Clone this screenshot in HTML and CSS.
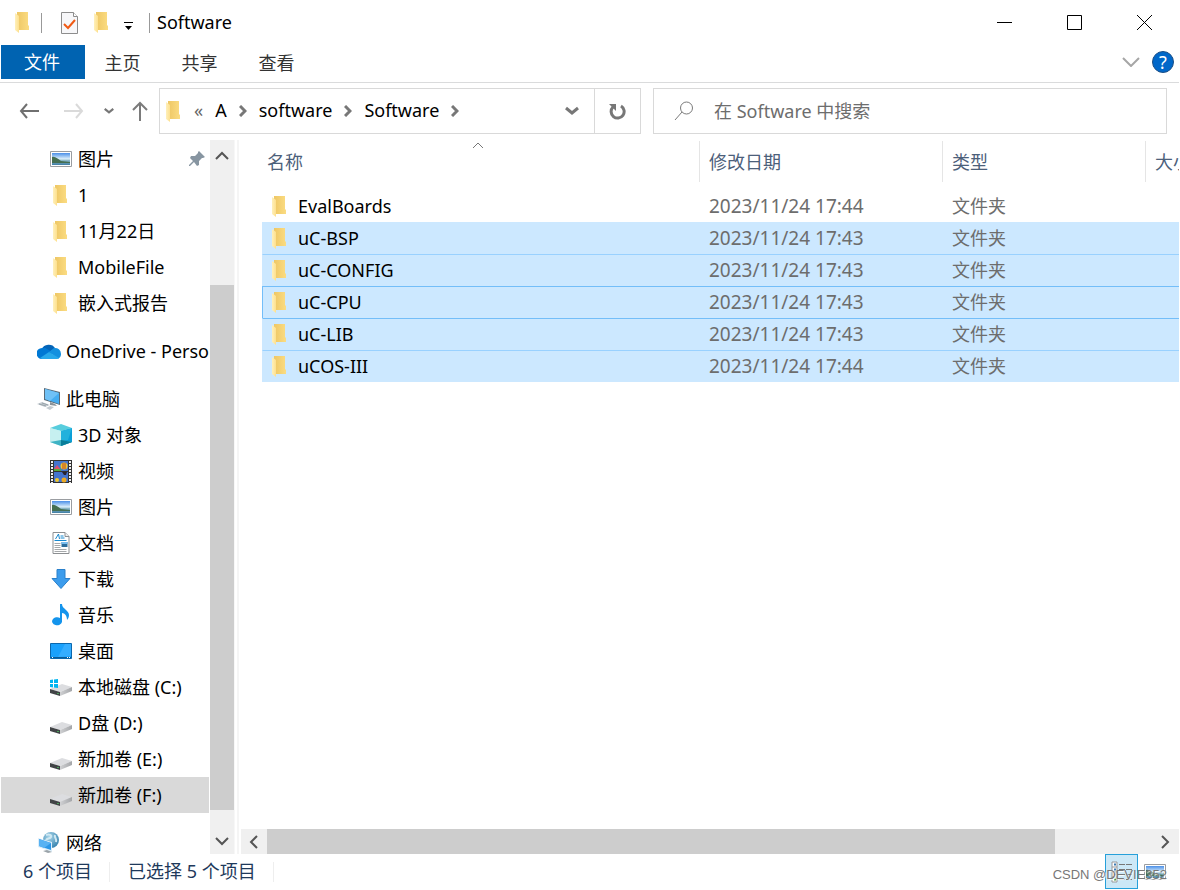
FILE: index.html
```html
<!DOCTYPE html>
<html lang="zh-CN">
<head>
<meta charset="utf-8">
<meta name="viewport" content="width=device-width, initial-scale=1">
<title>Software</title>
<link rel="stylesheet" href="styles.css">
</head>
<body>
<svg class="defs" aria-hidden="true">
  <defs>
    <linearGradient id="gf" x1="0" x2="1"><stop offset="0" stop-color="#eec765"/><stop offset="1" stop-color="#fbdc82"/></linearGradient>
    <linearGradient id="gl" x1="0" x2="1"><stop offset="0" stop-color="#fff0bb"/><stop offset="1" stop-color="#fde08e"/></linearGradient>
    <linearGradient id="gs" x1="0" x2="0" y1="0" y2="1"><stop offset="0" stop-color="#4a8fe8"/><stop offset=".5" stop-color="#dff1fb"/><stop offset=".6" stop-color="#8fb9c9"/><stop offset="1" stop-color="#3f7ea5"/></linearGradient>
    <linearGradient id="gd" x1="0" x2="1"><stop offset="0" stop-color="#d0d1d3"/><stop offset="1" stop-color="#a4a6a9"/></linearGradient>
    <radialGradient id="gg" cx=".4" cy=".3" r=".8"><stop offset="0" stop-color="#a9d6ea"/><stop offset="1" stop-color="#2b7aa8"/></radialGradient>
  </defs>
  <symbol id="folder" viewBox="0 0 14 21"><path d="M2 0h11v13l1 1v4H2z" fill="url(#gf)"/><path d="M0 1l4 3v17l-4-3z" fill="url(#gl)"/></symbol>
  <symbol id="picture" viewBox="0 0 22 16"><path d="M.5.5h21v15H.5z" fill="#fff" stroke="#9a9da1"/><path d="M2 2h18v12H2z" fill="url(#gs)"/><path d="M2 6c3-1 6 2 9 4l9 1v1H2z" fill="#456f52"/></symbol>
  <symbol id="cloud" viewBox="0 0 24 16"><path d="M5 6a7 6 0 0 1 13-1l-6 5z" fill="#0364b8"/><path d="M5 5a6 6 0 0 1 5 1l7 4-12 6A5 5 0 0 1 5 5z" fill="#0078d4"/><path d="M12 9l5-4a6 6 0 0 1 7 6 5 5 0 0 1-3 5z" fill="#1490df"/><path d="M3 15l9-6 10 6-2 1H5z" fill="#28a8ea"/></symbol>
  <symbol id="pc" viewBox="0 0 24 22"><path d="M7 0l16 4v13L7 12z" fill="#596b78"/><path d="M8 1l14 4v11L8 11z" fill="#45adf1"/><path d="M8 1l14 4-9 8-5-2z" fill="#6fc1f6"/><path d="M13 14l5 2 2 2-7-1z" fill="#8a9298"/><path d="M0 16l5-2 8 3-5 2z" fill="#c4cbd0"/><path d="M9 20l4-2 4 1-4 3z" fill="#c4cbd0"/><path d="M2 16l7 2M5 15l6 2" stroke="#9aa5ac" fill="none"/></symbol>
  <symbol id="cube" viewBox="0 0 22 22"><path d="M0 4l11 3v15L0 18z" fill="#b5ecef"/><path d="M11 7l11-3v14l-11 4z" fill="#0b9fd8"/><path d="M0 4l11-4 11 4-11 3z" fill="#58cddd"/><path d="M0 4l11 3v9L0 18z" fill="#c6f0f0"/><path d="M11 7l11-3-4 12-7 1z" fill="#22b1dc"/><path d="M0 18l11-2 11 2-11 4z" fill="#3fb3c4"/><path d="M11 16l11 2-11 4z" fill="#0a7e9a"/></symbol>
  <symbol id="video" viewBox="0 0 22 23"><path d="M0 0h22v23H0z" fill="#333"/><path d="M4 1h14v10H4zM4 12h14v10H4z" fill="#4474ce"/><path d="M2 1v22M20 1v22" stroke="#f1f1f1" stroke-width="2" stroke-dasharray="2 1"/><circle cx="14" cy="6" r="3.500" fill="#f0c62c"/><path d="M13 3v6M15 3v6" stroke="#b9442c"/><path d="M4 9l3-4 4 5z" fill="#e04e6a"/><path d="M4 10h7" stroke="#5aab3c" stroke-width="2"/><path d="M12 12h5l-1 3h-2z" fill="#282330"/><circle cx="7" cy="20" r="2" fill="#f0c62c"/><circle cx="14" cy="20" r="2.500" fill="#ecaa24"/></symbol>
  <symbol id="doc" viewBox="0 0 17 22"><path d="M.5.5h12l4 4v17H.5z" fill="#fff" stroke="#8c8f92"/><path d="M12.500.5v4h4" fill="#eee" stroke="#8c8f92"/><path d="M3 7l3-5 1 5M8 4h3M8 6h4M2 8.500h12" stroke="#1688cf" fill="none"/><path d="M2 11.500h6M2 13.500h6M2 15.500h6M2 17.500h12M2 19.500h12" stroke="#a5a8aa"/><path d="M9 10h6v5H9z" fill="#2d6e9c"/><path d="M9 10h6v2H9z" fill="#78bdef"/></symbol>
  <symbol id="down" viewBox="0 0 20 20"><path d="M6 .5h8v9h5l-9 10-9-10h5z" fill="#3c9cec" stroke="#2a80cb"/></symbol>
  <symbol id="music" viewBox="0 0 16 22"><path d="M7 0h2c0 5 7 6 7 11 0 2-1 4-2 5 0-4-2-7-5-7v9a5 4 0 1 1-2-4z" fill="#1494ec"/></symbol>
  <symbol id="desktop" viewBox="0 0 22 16"><path d="M.5.5h21v15H.5z" fill="#1aa1fc" stroke="#0b68ae"/><path d="M15 1h6v12L8 14z" fill="#35adff"/><path d="M1 14.500h20" stroke="#0b5b96"/><path d="M2 14.500h1M17 14.500h1M19 14.500h1" stroke="#fff"/></symbol>
  <symbol id="drive" viewBox="0 0 22 12"><path d="M0 5l12-5 10 3-12 5z" fill="#dcdde0"/><path d="M10 8l12-5v4l-12 5z" fill="url(#gd)"/><path d="M0 5l10 3v4L0 9z" fill="#414446"/><path d="M7 9.500h2" stroke="#4ca35b"/></symbol>
  <symbol id="windrive" viewBox="0 0 22 17"><use href="#drive" y="5" width="22" height="12"/><path d="M0 1l3-.5V4H0zM4 .4L8 0v4H4zM0 5h3v3.500L0 8zM4 5h4v4l-4-.4z" fill="#00b5f1"/></symbol>
  <symbol id="network" viewBox="0 0 22 22"><circle cx="13" cy="8" r="8" fill="url(#gg)"/><path d="M8 3c3-1 6 0 5 2s-4 1-5 3M17 3c-1 3 2 3 1 7" stroke="#cfe8f2" stroke-width="2" fill="none"/><path d="M0 6l14 4v10L0 15z" fill="#dceefa"/><path d="M1 7l12 4v7L1 14z" fill="#2c97e8"/><path d="M1 7l12 4-7 5-5-2z" fill="#58b2f3"/><path d="M5 19l5 2 4-1-5-2z" fill="#9aa3a9"/></symbol>
  <symbol id="pin" viewBox="0 0 16 16"><path d="M10 0l6 6-2 1-1 0-3 3v4l-2 1-3-4-4 4-1 0 0-1 4-4-3-3 1-2h4l3-3V1z" fill="#8795a1"/></symbol>
  <symbol id="cdown" viewBox="0 0 14 10"><path d="M1 2l6 5 6-5" fill="none" stroke="currentColor" stroke-width="3"/></symbol>
  <symbol id="sep" viewBox="0 0 8 12"><path d="M1 1l5 5-5 5" fill="none" stroke="#777" stroke-width="3"/></symbol>
</svg>

<header class="titlebar">
  <svg class="folder" aria-hidden="true"><use href="#folder"/></svg>
  <span class="rule"></span>
  <button class="quick check" aria-label="属性"><svg width="17" height="22" viewBox="0 0 17 22"><path d="M.5.5h12l4 4v17H.5z" fill="#f7f7f9" stroke="#8d8d8d"/><path d="M12.500.5v4h4" fill="#fff" stroke="#8d8d8d"/><path d="M3 12l4 4 7-8" fill="none" stroke="#f05a14" stroke-width="2"/></svg></button>
  <button class="quick" aria-label="新建文件夹"><svg class="folder"><use href="#folder"/></svg></button>
  <button class="quick more" aria-label="自定义快速访问工具栏"><svg width="9" height="8" viewBox="0 0 9 8"><path d="M0 .5h9" stroke="#000"/><path d="M1 4h7L4.500 8z"/></svg></button>
  <span class="rule"></span>
  <h1>Software</h1>
  <div class="winctl">
    <button aria-label="最小化"><svg width="15" height="15" viewBox="0 0 15 15"><path d="M0 7.500h15" stroke="#000"/></svg></button>
    <button aria-label="最大化"><svg width="15" height="15" viewBox="0 0 15 15"><path d="M.5.5h14v14H.5z" fill="none" stroke="#000"/></svg></button>
    <button aria-label="关闭"><svg width="15" height="15" viewBox="0 0 15 15"><path d="M0 0l15 15M15 0L0 15" stroke="#000"/></svg></button>
  </div>
</header>

<nav class="tabs" aria-label="功能区">
  <button class="tab file">文件</button>
  <button class="tab">主页</button>
  <button class="tab">共享</button>
  <button class="tab">查看</button>
  <button class="expand" aria-label="展开功能区"><svg width="18" height="10" viewBox="0 0 18 10"><path d="M1 1l8 8 8-8" fill="none" stroke="#a6a6a6" stroke-width="2"/></svg></button>
  <button class="help" aria-label="帮助">?</button>
</nav>

<div class="addressrow">
  <button class="arrow" aria-label="后退"><svg width="20" height="16" viewBox="0 0 20 16"><path d="M8 1L2 8l6 7M2 8h18" fill="none" stroke="#707070" stroke-width="2"/></svg></button>
  <button class="arrow" aria-label="前进"><svg width="20" height="16" viewBox="0 0 20 16"><path d="M12 1l6 7-6 7M18 8H0" fill="none" stroke="#dadada" stroke-width="2"/></svg></button>
  <button class="recent" aria-label="最近"><svg width="10" height="8"><use href="#cdown"/></svg></button>
  <button class="up" aria-label="上移"><svg width="16" height="20" viewBox="0 0 16 20"><path d="M1 9l7-7 7 7M8 2v18" fill="none" stroke="#7b7b7b" stroke-width="2"/></svg></button>
  <div class="address">
    <svg class="folder" aria-hidden="true"><use href="#folder"/></svg>
    <span class="laquo">«</span>
    <a href="#a">A</a>
    <svg class="sep"><use href="#sep"/></svg>
    <a href="#software">software</a>
    <svg class="sep"><use href="#sep"/></svg>
    <a href="#current">Software</a>
    <svg class="sep"><use href="#sep"/></svg>
    <button class="history" aria-label="历史记录"><svg width="14" height="10"><use href="#cdown"/></svg></button>
    <button class="refresh" aria-label="刷新"><svg width="17" height="17" viewBox="0 0 17 17"><path d="M12 3A6.500 6.500 0 1 1 4 4" fill="none" stroke="#777" stroke-width="3"/><path d="M0 1h7v7z" fill="#777"/></svg></button>
  </div>
  <label class="search">
    <svg width="20" height="20" viewBox="0 0 20 20"><circle cx="12.500" cy="7" r="6" fill="none" stroke="#7a7a7a"/><path d="M8 11l-7 8" stroke="#7a7a7a"/></svg>
    <input type="search" placeholder="在 Software 中搜索" aria-label="在 Software 中搜索">
  </label>
</div>

<div class="body">
  <nav class="tree" aria-label="导航窗格">
    <a class="node" href="#pic"><svg width="22" height="16"><use href="#picture"/></svg>图片<svg class="pin" width="16" height="16"><use href="#pin"/></svg></a>
    <a class="node" href="#1"><svg class="folder"><use href="#folder"/></svg>1</a>
    <a class="node" href="#1122"><svg class="folder"><use href="#folder"/></svg>11月22日</a>
    <a class="node" href="#mf"><svg class="folder"><use href="#folder"/></svg>MobileFile</a>
    <a class="node" href="#rep"><svg class="folder"><use href="#folder"/></svg>嵌入式报告</a>
    <a class="node root" href="#od"><svg width="24" height="16"><use href="#cloud"/></svg>OneDrive - Personal</a>
    <a class="node root" href="#pc"><svg width="24" height="22"><use href="#pc"/></svg>此电脑</a>
    <a class="node" href="#3d"><svg width="22" height="22"><use href="#cube"/></svg>3D 对象</a>
    <a class="node" href="#vid"><svg width="22" height="23"><use href="#video"/></svg>视频</a>
    <a class="node" href="#pic2"><svg width="22" height="16"><use href="#picture"/></svg>图片</a>
    <a class="node" href="#doc"><svg width="22" height="22"><use href="#doc"/></svg>文档</a>
    <a class="node" href="#down"><svg width="22" height="20"><use href="#down"/></svg>下载</a>
    <a class="node" href="#music"><svg width="22" height="22"><use href="#music"/></svg>音乐</a>
    <a class="node" href="#desk"><svg width="22" height="16"><use href="#desktop"/></svg>桌面</a>
    <a class="node" href="#c"><svg width="22" height="17"><use href="#windrive"/></svg>本地磁盘 (C:)</a>
    <a class="node drive" href="#d"><svg width="22" height="12"><use href="#drive"/></svg>D盘 (D:)</a>
    <a class="node drive" href="#e"><svg width="22" height="12"><use href="#drive"/></svg>新加卷 (E:)</a>
    <a class="node drive current" href="#f"><svg width="22" height="12"><use href="#drive"/></svg>新加卷 (F:)</a>
    <a class="node root" href="#net"><svg width="24" height="22"><use href="#network"/></svg>网络</a>
  </nav>
  <div class="vscroll" aria-hidden="true">
    <svg width="14" height="10" viewBox="0 0 14 10"><path d="M1 8l6-6 6 6" fill="none" stroke="#555" stroke-width="2"/></svg>
    <div class="track"><div class="thumb"></div></div>
    <svg width="14" height="10" viewBox="0 0 14 10"><path d="M1 2l6 6 6-6" fill="none" stroke="#555" stroke-width="2"/></svg>
  </div>
  <main class="pane">
    <div class="listing">
      <table>
        <colgroup><col class="c-name"><col class="c-date"><col class="c-type"><col></colgroup>
        <thead><tr>
          <th scope="col" aria-sort="ascending"><button>名称</button><svg class="sort" width="12" height="7" viewBox="0 0 12 7"><path d="M1 6l5-5 5 5" fill="none" stroke="#777"/></svg></th>
          <th scope="col"><button>修改日期</button></th><th scope="col"><button>类型</button></th><th scope="col"><button>大小</button></th>
        </tr></thead>
        <tbody>
          <tr><td><svg class="folder"><use href="#folder"/></svg>EvalBoards</td><td class="date">2023/11/24 17:44</td><td>文件夹</td><td></td></tr>
          <tr class="sel first"><td><svg class="folder"><use href="#folder"/></svg>uC-BSP</td><td class="date">2023/11/24 17:43</td><td>文件夹</td><td></td></tr>
          <tr class="sel"><td><svg class="folder"><use href="#folder"/></svg>uC-CONFIG</td><td class="date">2023/11/24 17:43</td><td>文件夹</td><td></td></tr>
          <tr class="sel focus"><td><svg class="folder"><use href="#folder"/></svg>uC-CPU</td><td class="date">2023/11/24 17:43</td><td>文件夹</td><td></td></tr>
          <tr class="sel"><td><svg class="folder"><use href="#folder"/></svg>uC-LIB</td><td class="date">2023/11/24 17:43</td><td>文件夹</td><td></td></tr>
          <tr class="sel"><td><svg class="folder"><use href="#folder"/></svg>uCOS-III</td><td class="date">2023/11/24 17:44</td><td>文件夹</td><td></td></tr>
        </tbody>
      </table>
    </div>
    <div class="hscroll" aria-hidden="true">
      <svg width="10" height="14" viewBox="0 0 10 14"><path d="M8 1L2 7l6 6" fill="none" stroke="#555" stroke-width="2"/></svg>
      <div class="track"><div class="thumb"></div></div>
      <svg width="10" height="14" viewBox="0 0 10 14"><path d="M2 1l6 6-6 6" fill="none" stroke="#555" stroke-width="2"/></svg>
    </div>
  </main>
</div>

<footer class="status">
  <span class="count">6 个项目</span>
  <span class="count">已选择 5 个项目</span>
  <div class="views">
    <button class="view on" aria-label="详细信息"><svg width="22" height="22" viewBox="0 0 22 22"><path d="M1 1h5v20H1zM1 6h5M1 11h5M1 16h5" fill="#fff" stroke="#999"/><path d="M3 3.500h2M3 8.500h2M3 13.500h2" stroke="#3b7cb4" stroke-width="2"/><path d="M3 18.500h2" stroke="#4b9b46" stroke-width="2"/><path d="M8 3.500h6M15 3.500h6M8 8.500h6M15 8.500h6M8 13.500h6M15 13.500h6M8 18.500h6M15 18.500h6" stroke="#777"/></svg></button>
    <button class="view" aria-label="大缩略图"><svg width="22" height="16"><use href="#picture"/></svg></button>
    <span class="mark">CSDN @DEVIE352</span>
  </div>
</footer>
</body>
</html>
```

FILE: styles.css
```css
* { box-sizing: border-box; }
body {
  margin: 0;
  height: 100vh;
  padding-right: 1px;
  display: flex;
  flex-direction: column;
  overflow: hidden;
  background: #fff;
  color: #000;
  font: 18px/24px "Noto Sans", "Noto Sans CJK SC", sans-serif;
}
.defs { position: absolute; width: 0; height: 0; }
button { border: 0; padding: 0; background: none; font: inherit; color: inherit; }
a { color: inherit; text-decoration: none; }
svg { flex: none; display: block; }
.folder { width: 14px; height: 21px; }

.titlebar { display: flex; align-items: center; height: 45px; padding-left: 15px; }
.rule { width: 1px; height: 20px; background: #999; }
.titlebar > .folder { margin-right: 12px; }
.quick { margin-right: 16px; }
.check { margin-left: 19px; }
.more { margin-right: 16px; padding-top: 6px; }
h1 { margin: 0 0 2px 7px; font-size: 18px; font-weight: 400; }
.winctl { display: flex; margin-left: auto; }
.winctl button { width: 70px; height: 45px; display: grid; place-items: center; }

.tabs { display: flex; align-items: center; padding: 0 5px 3px 1px; border-bottom: 1px solid #dadbdc; color: #333; }
.tab { width: 77px; height: 34px; padding: 2px 2px 0 0; }
.file { width: 84px; padding-top: 0; background: #0063b1; color: #fff; }
.expand { margin-left: auto; margin-right: 12px; }
.help { width: 22px; height: 22px; border-radius: 50%; background: #0067c9; border: 1px solid #1c4f86; color: #fff; line-height: 20px; }

.addressrow { display: flex; align-items: center; padding: 5px 12px 6px 19px; color: #777; }
.arrow { margin-right: 25px; }
.recent { margin-left: -5px; color: #777; }
.up { margin: 0 11px 0 18px; }
.address { flex: 1 1 482px; display: flex; align-items: center; height: 46px; border: 1px solid #d9d9d9; padding-left: 6px; color: #000; }
.address .folder { margin-right: 14px; }
.address a { padding-bottom: 2px; }
.laquo { color: #666; margin-right: 12px; padding-bottom: 2px; }
.sep { width: 8px; height: 12px; margin: 0 12px; }
.history { margin: 0 15px 0 auto; color: #777; }
.refresh { width: 46px; height: 44px; border-left: 1px solid #d9d9d9; display: grid; place-items: center; }
.search { flex: 1 1 514px; display: flex; align-items: center; height: 46px; margin-left: 12px; border: 1px solid #d9d9d9; padding-left: 20px; }
.search input { flex: 1; min-width: 0; border: 0; outline: 0; margin-left: 20px; padding: 0; font: inherit; }
.search input::placeholder { color: #6d6d6d; opacity: 1; }

.body { flex: 1; min-height: 0; display: flex; }
.tree { width: 210px; overflow: hidden; padding: 1px 1px 0; }
.node { position: relative; display: flex; align-items: center; height: 36px; padding-left: 49px; gap: 6px; white-space: nowrap; }
.node .folder { width: 14px; margin: 0 5px 0 3px; }
.root { padding-left: 36px; gap: 5px; margin-top: 12px; }
.drive svg { margin-top: 9px; }
.current { background: #d9d9d9; }
.node .pin { margin-left: auto; margin-right: 4px; }
.vscroll { width: 25px; display: flex; flex-direction: column; align-items: center; padding: 11px 0 8px; background: #f0f0f0; border-right: 1px solid #f7f7f7; }
.track { flex: 1; display: flex; background: #f0f0f0; }
.vscroll .track { width: 24px; flex-direction: column; margin: 8px 0 7px; padding: 116px 0 19px; }
.thumb { flex: 1; background: #cdcdcd; }

.pane { flex: 1; min-width: 0; display: flex; flex-direction: column; margin-left: 2px; padding-left: 2px; border-left: 2px solid #f5f5f5; }
.listing { flex: 1; overflow: hidden; padding: 1px 0 0 21px; }
table { width: 100%; table-layout: fixed; border-collapse: separate; border-spacing: 0; }
.c-name { width: 438px; }
.c-date { width: 243px; }
.c-type { width: 203px; }
th { position: relative; padding: 0 0 8px; text-align: left; font-weight: 400; color: #4c607a; overflow: hidden; }
th button { width: 100%; height: 41px; padding-left: 9px; text-align: left; white-space: nowrap; border-right: 1px solid #e5e5e5; }
th:first-child button { padding-left: 5px; }
th:last-child button { border: 0; }
.sort { position: absolute; top: 1px; left: 50%; margin-left: -9px; }
td { height: 32px; padding: 0 0 2px 9px; border-top: 1px solid transparent; color: #6d6d6d; white-space: nowrap; }
td:first-child { padding-bottom: 0; color: #000; border-left: 1px solid transparent; }
.date { font-size: 19px; }
td .folder { display: inline-block; vertical-align: middle; margin: 0 12px 2px 0; }
.sel td { background: #cce8ff; border-top-color: #99d1ff; }
.sel td:first-child { border-left-color: #cce8ff; }
.first td { border-top-color: #cce8ff; }
.focus td, .focus + .sel td { border-top-color: #73bef9; }
.sel.focus td:first-child { border-left-color: #73bef9; }
.hscroll { display: flex; align-items: center; height: 25px; padding: 0 9px 0 8px; background: #f0f0f0; }
.hscroll .track { height: 25px; margin: 0 7px 0 8px; padding-right: 98px; }

.status { display: flex; align-items: center; height: 36px; padding-left: 5px; color: #1e395b; }
.count { padding: 0 17px 2px 18px; line-height: 18px; border-right: 1px solid #eee; }
.views { position: relative; display: flex; align-self: flex-start; margin-left: auto; padding-right: 8px; }
.view { width: 33px; height: 35px; display: grid; place-items: center; }
.on { background: #cce8f7; border: 1px solid #26a0da; }
.mark { position: absolute; right: 12px; top: 12px; font: 13px/18px "Liberation Sans", sans-serif; color: #777; text-shadow: 1px 1px 1px #fff; white-space: nowrap; }
```
